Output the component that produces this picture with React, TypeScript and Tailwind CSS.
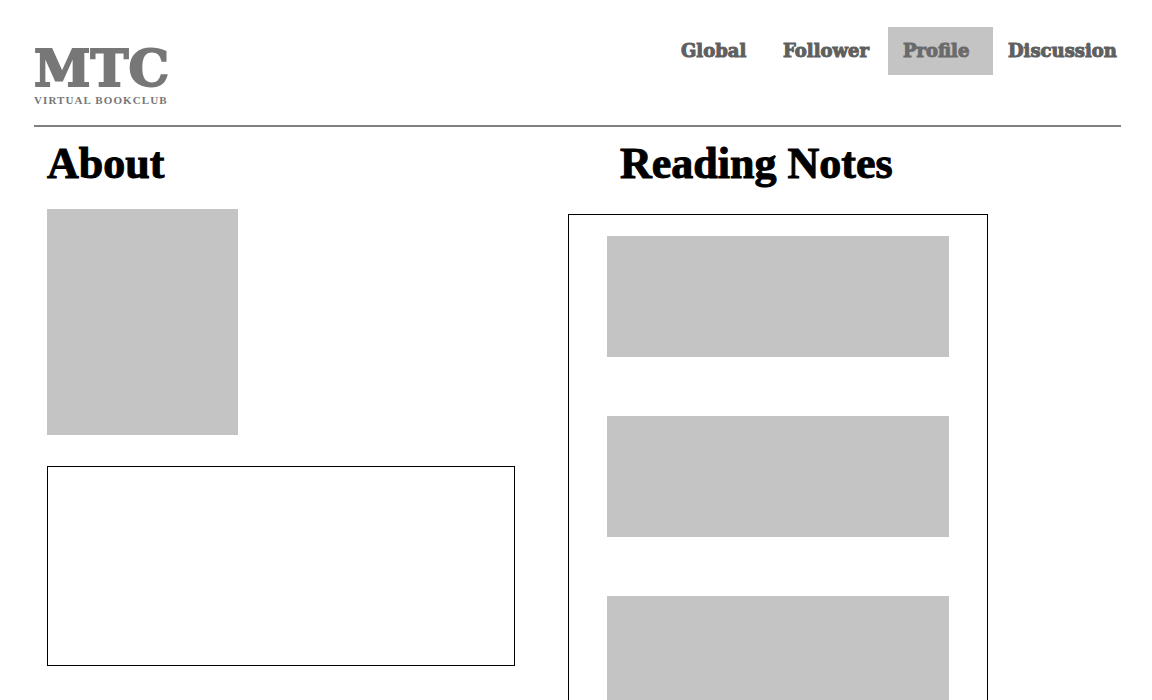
const links = [
  { label: 'Global', style: 'w-[102px]' },
  { label: 'Follower', style: 'w-[120px]' },
  { label: 'Profile', style: 'w-[105px] bg-[#c4c4c4] text-[#6a6a6a]', current: true },
  { label: 'Discussion', style: 'w-[128px]' },
];

function Header() {
  return (
    <header className="flex items-start justify-between border-b-2 border-[#808080] pb-[19px]">
      <a href="#home" className="block pt-[15px] text-[#777777]">
        <span className="block font-['DejaVu_Serif',serif] text-[51px] leading-[52px] font-bold [-webkit-text-stroke:2px_#777777]">
          MTC
        </span>
        <span className="block font-['Liberation_Serif',serif] text-[11px] leading-[12px] font-bold tracking-widest">
          VIRTUAL BOOKCLUB
        </span>
      </a>
      <nav className="flex font-['DejaVu_Serif',serif] text-[18px] leading-[48px] font-bold text-[#5f5f5f] [-webkit-text-stroke:1px]">
        {links.map((link) => (
          <a
            key={link.label}
            href={`#${link.label.toLowerCase()}`}
            aria-current={link.current ? 'page' : undefined}
            className={`block h-12 pl-[15px] ${link.style}`}
          >
            {link.label}
          </a>
        ))}
      </nav>
    </header>
  );
}

export default function App() {
  return (
    <div className="min-h-screen bg-white pt-[27px] pr-[31px] pl-[34px] text-black">
      <Header />
      <main className="flex items-start gap-[53px] pt-3 pl-[13px]">
        <section className="w-[468px]">
          <h1 className="font-['Liberation_Serif',serif] text-[44px] leading-[50px] font-bold [-webkit-text-stroke:1px]">
            About
          </h1>
          <div className="mt-5 h-[226px] w-[191px] bg-[#c4c4c4]" />
          <div className="mt-[31px] h-[200px] border border-black" />
        </section>
        <section className="w-[420px]">
          <h2 className="pl-[52px] font-['Liberation_Serif',serif] text-[44px] leading-[50px] font-bold [-webkit-text-stroke:1px]">
            Reading Notes
          </h2>
          <div className="mt-[25px] flex flex-col gap-[59px] border border-black px-[38px] py-[21px]">
            <div className="h-[121px] bg-[#c4c4c4]" />
            <div className="h-[121px] bg-[#c4c4c4]" />
            <div className="h-[121px] bg-[#c4c4c4]" />
          </div>
        </section>
      </main>
    </div>
  );
}
